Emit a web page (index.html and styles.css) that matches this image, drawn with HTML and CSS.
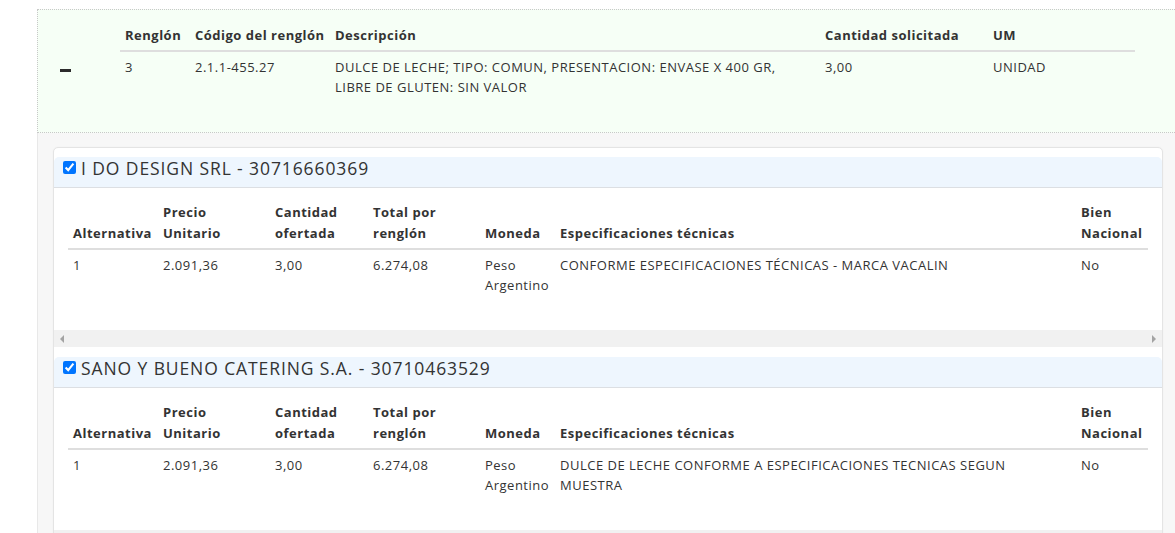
FILE: index.html
```html
<!DOCTYPE html>
<html lang="es">
<head>
<meta charset="utf-8">
<title>Renglón</title>
<link rel="stylesheet" href="styles.css">
</head>
<body>
<div class="page">
  <div class="lote">
    <div class="toggle"><span class="minus"></span></div>
    <table class="lote-table">
      <colgroup>
        <col style="width:70px"><col style="width:140px"><col style="width:490px"><col style="width:168px"><col style="width:147px">
      </colgroup>
      <thead>
        <tr><th>Renglón</th><th>Código del renglón</th><th>Descripción</th><th>Cantidad solicitada</th><th>UM</th></tr>
      </thead>
      <tbody>
        <tr>
          <td>3</td>
          <td>2.1.1-455.27</td>
          <td>DULCE DE LECHE; TIPO: COMUN, PRESENTACION: ENVASE X 400 GR,<br>LIBRE DE GLUTEN: SIN VALOR</td>
          <td>3,00</td>
          <td>UNIDAD</td>
        </tr>
      </tbody>
    </table>
  </div>

  <div class="card">
    <section class="oferta">
      <header class="oferta-head">
        <input type="checkbox" checked class="chk">
        <span class="oferta-title">I DO DESIGN SRL - 30716660369</span>
      </header>
      <div class="scroll">
        <table class="oferta-table">
          <colgroup>
            <col style="width:90px"><col style="width:112px"><col style="width:98px"><col style="width:112px"><col style="width:75px"><col style="width:521px"><col style="width:72px">
          </colgroup>
          <thead>
            <tr><th>Alternativa</th><th>Precio<br>Unitario</th><th>Cantidad<br>ofertada</th><th>Total por<br>renglón</th><th>Moneda</th><th>Especificaciones técnicas</th><th>Bien<br>Nacional</th></tr>
          </thead>
          <tbody>
            <tr><td>1</td><td>2.091,36</td><td>3,00</td><td>6.274,08</td><td>Peso<br>Argentino</td><td>CONFORME ESPECIFICACIONES TÉCNICAS - MARCA VACALIN</td><td>No</td></tr>
          </tbody>
        </table>
      </div>
      <div class="hscroll"><span class="arr arr-l"></span><span class="arr arr-r"></span></div>
    </section>

    <section class="oferta">
      <header class="oferta-head">
        <input type="checkbox" checked class="chk">
        <span class="oferta-title">SANO Y BUENO CATERING S.A. - 30710463529</span>
      </header>
      <div class="scroll">
        <table class="oferta-table">
          <colgroup>
            <col style="width:90px"><col style="width:112px"><col style="width:98px"><col style="width:112px"><col style="width:75px"><col style="width:521px"><col style="width:72px">
          </colgroup>
          <thead>
            <tr><th>Alternativa</th><th>Precio<br>Unitario</th><th>Cantidad<br>ofertada</th><th>Total por<br>renglón</th><th>Moneda</th><th>Especificaciones técnicas</th><th>Bien<br>Nacional</th></tr>
          </thead>
          <tbody>
            <tr><td>1</td><td>2.091,36</td><td>3,00</td><td>6.274,08</td><td>Peso<br>Argentino</td><td>DULCE DE LECHE CONFORME A ESPECIFICACIONES TECNICAS SEGUN<br>MUESTRA</td><td>No</td></tr>
          </tbody>
        </table>
      </div>
      <div class="hscroll"><span class="arr arr-l"></span><span class="arr arr-r"></span></div>
    </section>
  </div>
</div>
</body>
</html>
```
FILE: styles.css
```css
* { box-sizing: border-box; }
html, body { margin: 0; padding: 0; }
body {
  background: #fff;
  font-family: "Open Sans", "Noto Sans", sans-serif;
  font-size: 13px;
  letter-spacing: 0.5px;
  color: #333;
  overflow: hidden;
  height: 533px;
}
.page {
  margin: 9px 0 0 37px;
  background: #f7f7f7;
  border-left: 1px solid #e8e8e8;
  min-height: 600px;
}
.lote {
  display: flex;
  background: #f6fff6;
  border-top: 1px dotted #c8c8c8;
  border-bottom: 1px dotted #c8c8c8;
  margin-left: -1px;
  border-left: 1px dotted #c8c8c8;
  height: 124px;
}
.toggle {
  width: 82px;
  flex: none;
  padding: 59px 0 0 22px;
}
.minus {
  display: block;
  width: 11px;
  height: 3px;
  background: #2b2b2b;
}
table { border-collapse: collapse; table-layout: fixed; }
.lote-table {
  margin-top: 10px;
  width: 1015px;
  align-self: flex-start;
}
.lote-table th {
  text-align: left;
  font-weight: 700;
  line-height: 18px;
  padding: 6px 5px 6px 5px;
  border-bottom: 2px solid #dedede;
  white-space: nowrap;
}
.lote-table td {
  vertical-align: top;
  line-height: 20px;
  padding: 5px 5px;
}
.card {
  margin: 14px 0 0 15px;
  width: 1110px;
  background: #fff;
  border: 1px solid #e4e4e4;
  border-radius: 5px;
  overflow: hidden;
  box-shadow: 0 0 2px rgba(0,0,0,0.04);
}
.oferta { padding-top: 10px; }
.oferta:first-child { padding-top: 9px; }
.oferta-head {
  display: flex;
  align-items: center;
  height: 31px;
  background: #eef6fe;
  border-bottom: 1px solid #dcdfe3;
  border-radius: 5px 5px 0 0;
  padding-left: 9px;
  padding-bottom: 9px;
}
.chk {
  margin: 0 5px 0 0;
  width: 13px;
  height: 13px;
  accent-color: #0075ff;
}
.oferta-title {
  font-size: 17.5px;
  line-height: 20px;
  color: #333;
  letter-spacing: 0.9px;
}
.scroll {
  padding: 8px 0 0 14px;
  overflow: hidden;
}
.oferta-table {
  width: 1080px;
  margin-bottom: 30px;
}
.oferta-table th {
  text-align: left;
  vertical-align: bottom;
  font-weight: 700;
  line-height: 21px;
  padding: 6px 5px 4px 5px;
  border-bottom: 2px solid #dedede;
  white-space: nowrap;
}
.oferta-table td {
  vertical-align: top;
  line-height: 20px;
  padding: 5px 5px 5px 5px;
  white-space: nowrap;
}
.hscroll {
  position: relative;
  height: 17px;
  background: #f1f1f1;
}
.arr {
  position: absolute;
  top: 5px;
  width: 0;
  height: 0;
  border-top: 4px solid transparent;
  border-bottom: 4px solid transparent;
}
.arr-l { left: 6px; border-right: 4px solid #a3a3a3; }
.arr-r { right: 6px; border-left: 4px solid #a3a3a3; }
```
